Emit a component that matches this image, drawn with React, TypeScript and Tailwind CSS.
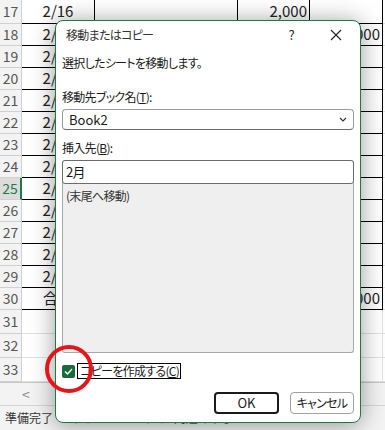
const rows = [
  { n: 17, a: "2/16", c: "2,000", d: "" },
  { n: 18, a: "2/17", c: "", d: "2,000" },
  { n: 19, a: "2/18", c: "", d: "" },
  { n: 20, a: "2/19", c: "", d: "" },
  { n: 21, a: "2/20", c: "", d: "" },
  { n: 22, a: "2/21", c: "", d: "" },
  { n: 23, a: "2/22", c: "", d: "" },
  { n: 24, a: "2/23", c: "", d: "" },
  { n: 25, a: "2/24", c: "", d: "" },
  { n: 26, a: "2/25", c: "", d: "" },
  { n: 27, a: "2/26", c: "", d: "" },
  { n: 28, a: "2/27", c: "", d: "" },
  { n: 29, a: "2/28", c: "", d: "" },
  { n: 30, a: "合計", c: "", d: "28,000" },
];

function Sheet() {
  return (
    <div className="flex h-[383px] flex-col border-b border-[#c8c8c8]">
      {rows.map((r) => (
        <div key={r.n} className={`flex ${r.n === 17 ? "h-[24px]" : "h-[22px]"}`}>
          <div
            className={
              r.n === 25
                ? "flex w-[22px] items-center justify-center border-r-2 border-b border-r-[#1e7a45] border-b-[#d0d0d0] bg-[#dcdcdc] text-[14px] text-[#1e7a45]"
                : "flex w-[22px] items-center justify-center border-r border-b border-[#d0d0d0] bg-[#f3f3f3] text-[14px] text-[#555]"
            }
          >
            {r.n}
          </div>
          <div className="flex w-[73px] items-center justify-center border-r border-b border-black text-[15px] text-[#222]">
            {r.a}
          </div>
          <div className="w-[143px] border-r border-b border-black" />
          <div className="flex w-[72px] items-center justify-end border-r border-b border-black pr-[2px] text-[15px] text-[#222]">
            {r.c}
          </div>
          <div className="flex w-[73px] items-center justify-end border-r border-b border-black pr-[2px] text-[15px] text-[#222]">
            {r.d}
          </div>
          <div className="flex-1 border-b border-[#e1e1e1]" />
        </div>
      ))}
      {[31, 32, 33].map((n) => (
        <div key={n} className="flex h-[24px]">
          <div className="flex w-[22px] items-center justify-center border-r border-b border-[#d0d0d0] bg-[#f3f3f3] text-[14px] text-[#555]">
            {n}
          </div>
          <div className="w-[73px] border-r border-b border-[#e1e1e1]" />
          <div className="w-[143px] border-r border-b border-[#e1e1e1]" />
          <div className="w-[72px] border-r border-b border-[#e1e1e1]" />
          <div className="w-[73px] border-r border-b border-[#e1e1e1]" />
          <div className="flex-1 border-b border-[#e1e1e1]" />
        </div>
      ))}
    </div>
  );
}

function Dialog() {
  return (
    <div className="absolute left-[55px] top-[20px] flex h-[403px] w-[306px] flex-col rounded-[8px] border border-[#1e7a45] bg-white px-[6px] tracking-[-0.7px] shadow-[0_2px_24px_rgba(0,0,0,0.4)] [font-feature-settings:'palt']">
      {/* title */}
      <div className="flex h-[28px] items-center pl-[4px] text-[12px] text-[#333]">
        <span className="flex-1">移動またはコピー</span>
        <span className="mr-[36px] text-[13px] text-[#222]">?</span>
        <svg width="12" height="12" viewBox="0 0 12 12" className="mr-[12px]">
          <path d="M1 1L11 11M11 1L1 11" stroke="#222" strokeWidth="1.1" />
        </svg>
      </div>

      <div className="mt-[5px] h-[18px] text-[12px] leading-[18px] text-[#1a1a1a]">
        選択したシートを移動します。
      </div>

      <div className="mt-[16px] h-[18px] text-[12px] leading-[18px] text-[#1a1a1a]">
        移動先ブック名(<span className="underline">T</span>):
      </div>
      <div className="mt-[3px] flex h-[21px] items-center rounded-[4px] border border-[#9a9a9a] border-b-[#6a6a6a] pl-[6px] pr-[6px] text-[13px] tracking-normal text-[#1a1a1a]">
        <span className="flex-1">Book2</span>
        <svg width="8" height="5" viewBox="0 0 8 5">
          <path d="M1 1L4 4L7 1" stroke="#333" strokeWidth="1.2" fill="none" />
        </svg>
      </div>

      <div className="mt-[9px] h-[18px] text-[12px] leading-[18px] text-[#1a1a1a]">
        挿入先(<span className="underline">B</span>):
      </div>
      <div className="mt-[3px] flex h-[193px] flex-col rounded-[3px] border-x border-b border-[#a8a8a8] bg-[#efefef]">
        <div className="-mx-px flex h-[24px] items-center rounded-[3px] border-[1.5px] border-[#6b6b6b] bg-white pl-[3px] text-[13px] text-[#1a1a1a]">
          2月
        </div>
        <div className="mt-[3px] pl-[3px] text-[12px] leading-[18px] text-[#333]">
          (末尾へ移動)
        </div>
      </div>

      <div className="mt-[10px] flex h-[16px] items-center">
        <div className="flex h-[13px] w-[13px] items-center justify-center rounded-[2px] bg-[#1a6b3c]">
          <svg width="9" height="7" viewBox="0 0 9 7">
            <path d="M1 3.5L3.5 6L8 1" stroke="white" strokeWidth="1.4" fill="none" />
          </svg>
        </div>
        <div className="ml-[2px] flex h-[16px] items-center border border-black pl-[2px] pr-[1px] text-[12px] text-[#1a1a1a]">
          コピーを作成する(<span className="underline">C</span>)
        </div>
      </div>

      <div className="mt-[13px] flex justify-end gap-[11px]">
        <button className="flex h-[22px] w-[65px] items-center justify-center rounded-[4px] border-2 border-[#1a1a1a] text-[13px] tracking-normal text-[#1a1a1a]">
          OK
        </button>
        <button className="flex h-[22px] w-[64px] items-center justify-center rounded-[4px] border border-[#a0a0a0] text-[12px] text-[#1a1a1a]">
          キャンセル
        </button>
      </div>
    </div>
  );
}

export default function App() {
  return (
    <div className="relative h-[430px] w-[385px] overflow-hidden bg-white font-['Noto_Sans_CJK_JP',sans-serif]">
      <Sheet />
      {/* tab bar */}
      <div className="flex h-[22px] items-center bg-[#f3f3f3] pl-[22px] text-[14px] text-[#888]">
        &lt;
      </div>
      {/* status bar */}
      <div className="flex h-[25px] items-center border-t border-[#d6d6d6] bg-[#f3f3f3] pl-[5px] text-[12px] text-[#333]">
        <span>準備完了</span>
        <span className="ml-[20px] text-[#555]">アクセシビリティ: 問題ありません</span>
      </div>

      <Dialog />

      {/* red marker circle */}
      <div className="absolute left-[45px] top-[345px] h-[48px] w-[48px] rounded-full border-[4px] border-[#e3161b]" />
    </div>
  );
}
